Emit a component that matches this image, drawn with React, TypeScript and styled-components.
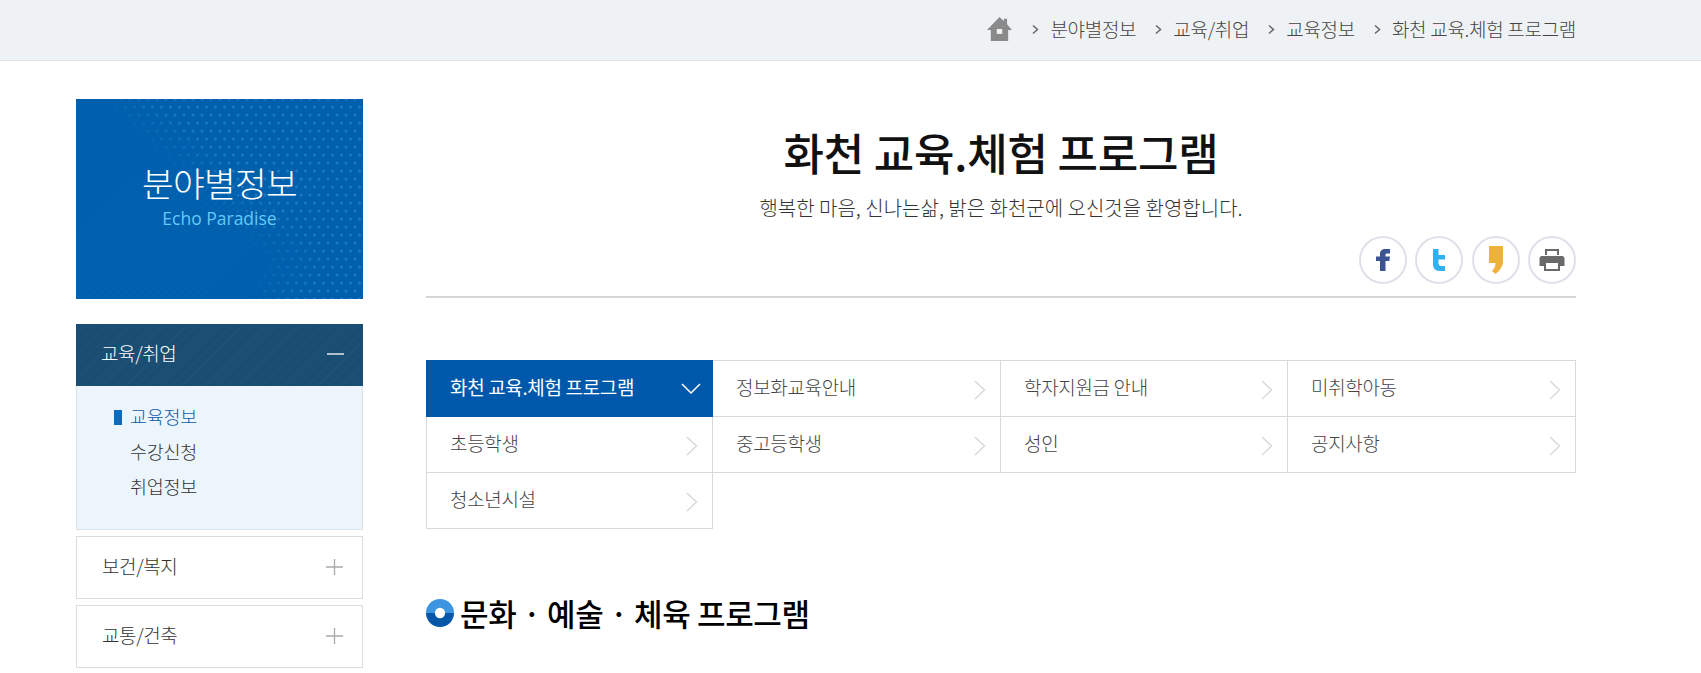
import React from "react";
import styled, { createGlobalStyle } from "styled-components";

const Global = createGlobalStyle`
  html, body { margin: 0; padding: 0; height: 673px; overflow: hidden; background: #fff; }
  body { font-family: "Noto Sans CJK KR", "Noto Sans", sans-serif; color: #333; }
  * { box-sizing: border-box; }
`;
const TopBar = styled.div`
  height: 61px; background: #eff2f5; border-bottom: 1px solid #dfe3e6;
  display: flex; justify-content: flex-end; align-items: center; padding: 0 125px 2px 0;
`;
const Crumb = styled.span`
  font-size: 19px; font-weight: 300; color: #444; letter-spacing: -0.3px; display: flex; align-items: center; margin-left: 18px; line-height: 24px;
`;
const Body = styled.div`
  display: flex; gap: 63px; padding: 38px 125px 0 76px;
`;
const Side = styled.aside`
  width: 287px; flex: none;
`;
const Banner = styled.div`
  height: 200px; position: relative; overflow: hidden; background: #0060ad; color: #fff;
  display: flex; flex-direction: column; align-items: center; padding-top: 62px;
`;
const BannerArt = styled.svg`
  position: absolute; inset: 0; width: 100%; height: 100%;
`;
const BannerTitle = styled.div`
  position: relative; font-size: 34.5px; line-height: 42px; font-weight: 300; letter-spacing: -0.7px;
`;
const BannerSub = styled.div`
  position: relative; font-family: "Open Sans", sans-serif; font-size: 17.5px; line-height: 24px; color: #66c8fb; margin-top: 3px;
`;
const MenuHead = styled.div<{ $active?: boolean }>`
  height: ${p => (p.$active ? 62 : 63)}px; margin-top: ${p => (p.$active ? 25 : 6)}px; padding: 0 18px 0 25px;
  display: flex; align-items: center; justify-content: space-between;
  font-size: 19px; font-weight: 300; letter-spacing: -0.4px;
  color: ${p => (p.$active ? "#fff" : "#333")};
  border: ${p => (p.$active ? "none" : "1px solid #dcdcdc")};
  background: ${p => (p.$active ? "repeating-linear-gradient(135deg,#1a4d72 0 6px,#1d5077 6px 8px)" : "#fff")};
  & > span { margin-top: -5px; }
`;
const SubPanel = styled.div`
  height: 144px; background: #edf5fc; border: 1px solid #dce3e8; border-top: none; padding: 13px 0 0 53px;
`;
const SubItem = styled.div<{ $active?: boolean }>`
  font-size: 18.5px; font-weight: 300; line-height: 35px; position: relative; letter-spacing: -0.3px;
  color: ${p => (p.$active ? "#0f5ca6" : "#333")};
  ${p => p.$active && `&::before{content:"";position:absolute;left:-16px;top:11px;width:8px;height:15px;background:#0a6cc0;}`}
`;
const Main = styled.main`
  flex: 1; min-width: 0;
`;
const Head = styled.div`
  border-bottom: 2px solid #d6d6d6; height: 199px; display: flex; flex-direction: column; align-items: center;
`;
const Title = styled.h1`
  margin: 22px 0 0; font-size: 44px; line-height: 62px; font-weight: 500; color: #111; letter-spacing: -0.2px;
`;
const Subtitle = styled.p`
  margin: 11px 0 0; font-size: 20px; font-weight: 300; line-height: 28px; color: #333; letter-spacing: 0;
`;
const Shares = styled.div`
  align-self: flex-end; display: flex; gap: 8.300px; margin-top: 14px;
`;
const Share = styled.div`
  width: 48px; height: 48px; border: 2px solid #dfe1ea; border-radius: 50%; display: flex; align-items: center; justify-content: center; background: #fff;
`;
const Grid = styled.div`
  margin-top: 62px; display: grid; grid-template-columns: 287px 288px 287px 288px; border-top: 1px solid #d9d9d9;
`;
const Cell = styled.div<{ $on?: boolean; $first?: boolean }>`
  padding: 0 14px 0 23px; display: flex; align-items: center; justify-content: space-between;
  font-size: 19px; font-weight: ${p => (p.$on ? 400 : 300)}; letter-spacing: -0.35px;
  color: ${p => (p.$on ? "#fff" : "#444")};
  background: ${p => (p.$on ? "#0058aa" : "#fff")};
  margin-top: ${p => (p.$on ? "-1px" : "0")};
  height: ${p => (p.$on ? "57px" : "56px")};
  border-right: 1px solid #d9d9d9;
  border-bottom: 1px solid #d9d9d9;
  border-left: ${p => (p.$first ? "1px solid #d9d9d9" : "none")};
  ${p => p.$on && "border: none; padding: 0 12px 0 24px;"}
  & > span { margin-top: -5px; }
`;
const Section = styled.h2`
  margin: 62px 0 0; display: flex; align-items: center; gap: 6px; font-size: 31px; line-height: 44px; font-weight: 500; color: #000; letter-spacing: -0.35px;
`;

const Home = () => (
  <svg width="27" height="26" viewBox="0 0 24 24">
    <path fill="#8a8a8a" d="M12 1 16 4.500V2.500h3v5l4.500 5.500H20v10H4V13H.5z" />
    <rect x="9.500" y="12" width="5" height="4.500" fill="#eff2f5" />
  </svg>
);
const Gt = () => (
  <svg width="9" height="11" viewBox="0 0 9 11" style={{ marginRight: 10 }}>
    <path d="M2 1.500 6.500 5.500 2 9.500" fill="none" stroke="#666" strokeWidth="1.500" />
  </svg>
);
const Plus = () => (
  <svg width="18" height="18" viewBox="0 0 18 18"><path d="M0 8h17M8.500 0v16" stroke="#aaa" strokeWidth="1.300" /></svg>
);
const Minus = () => (
  <svg width="18" height="18" viewBox="0 0 18 18"><path d="M0 8h17" stroke="#fff" strokeWidth="1.300" /></svg>
);
const Chev = () => (
  <svg width="12" height="20" viewBox="0 0 12 20" style={{ marginTop: 3 }}><path d="M1 1l9.500 9L1 19" fill="none" stroke="#d8d8d8" strokeWidth="1.400" /></svg>
);
const Down = () => (
  <svg width="20" height="12" viewBox="0 0 20 12"><path d="M1 1l9 9 9-9" fill="none" stroke="#fff" strokeWidth="1.500" /></svg>
);
const dots: React.ReactElement[] = [];
for (let r = 0; r < 26; r++) for (let c = 0; c < 34; c++) {
  const x = c * 9 + (r % 2 ? 4.500 : 0), y = r * 8;
  const upper = Math.max(0, Math.min(1, (x - y * 1.05 - 15) / 70));
  const lower = Math.max(0, Math.min(1, (x + y * 0.4 - 240) / 70)) * (y > 120 ? 1 : 0.8);
  const o = Math.max(upper, lower);
  if (o <= 0) continue;
  dots.push(<circle key={`${r}-${c}`} cx={x} cy={y} r="1.600" fill="#3f8fd0" opacity={o * 0.5} />);
}
const stripes: React.ReactElement[] = [];
for (let i = 0; i < 24; i++) stripes.push(<path key={i} d={`M${i * 8 - 60} 200 L${i * 8 + 60} 80`} stroke="#0a6ab5" strokeWidth="1.200" opacity={0.55} />);

const row1 = ["정보화교육안내", "학자지원금 안내", "미취학아동"];
const row2 = ["초등학생", "중고등학생", "성인", "공지사항"];

export default function App() {
  return (
    <>
      <Global />
      <TopBar>
        <Home />
        {["분야별정보", "교육/취업", "교육정보", "화천 교육.체험 프로그램"].map(t => (
          <Crumb key={t}><Gt />{t}</Crumb>
        ))}
      </TopBar>
      <Body>
        <Side>
          <Banner>
            <BannerArt viewBox="0 0 287 200">
              <g>{stripes}</g>
              <g>{dots}</g>
            </BannerArt>
            <BannerTitle>분야별정보</BannerTitle>
            <BannerSub>Echo Paradise</BannerSub>
          </Banner>
          <MenuHead $active><span>교육/취업</span><Minus /></MenuHead>
          <SubPanel>
            <SubItem $active>교육정보</SubItem>
            <SubItem>수강신청</SubItem>
            <SubItem>취업정보</SubItem>
          </SubPanel>
          <MenuHead><span>보건/복지</span><Plus /></MenuHead>
          <MenuHead><span>교통/건축</span><Plus /></MenuHead>
        </Side>
        <Main>
          <Head>
            <Title>화천 교육.체험 프로그램</Title>
            <Subtitle>행복한 마음, 신나는삶, 밝은 화천군에 오신것을 환영합니다.</Subtitle>
            <Shares>
              <Share>
                <svg width="20" height="26" viewBox="0 0 20 24"><path fill="#3b5591" d="M7 23V13H3V8.500h4V6C7 2.800 9 1 12.500 1H17v4.500h-3C12.800 5.500 12.500 6 12.500 7v1.500H17l-.7 4.500h-3.800v10z" /></svg>
              </Share>
              <Share>
                <svg width="20" height="26" viewBox="0 0 20 24"><path fill="#2fb0f2" d="M4 1h5.500v6H16v4.500H9.500V15c0 2 1 3 3 3H16v5h-5C6.500 23 4 20.500 4 16z" /></svg>
              </Share>
              <Share>
                <svg width="20" height="30" viewBox="0 0 20 30"><path fill="#eeb23c" d="M3 1h14v16c0 4-3.500 9-7.500 12L6 26c2-2 3.500-5 3.500-8H3z" /></svg>
              </Share>
              <Share>
                <svg width="26" height="24" viewBox="0 0 26 24">
                  <path fill="#6a6a6a" d="M6 1h14v6h-2V3H8v4H6zM3 8h20c1.500 0 2.500 1 2.500 2.500V18H21v5H5v-5H.5v-7.500C.5 9 1.500 8 3 8z" />
                  <rect x="7" y="15" width="12" height="6" fill="#fff" />
                </svg>
              </Share>
            </Shares>
          </Head>
          <Grid>
            <Cell $on $first><span>화천 교육.체험 프로그램</span><Down /></Cell>
            {row1.map(t => <Cell key={t}><span>{t}</span><Chev /></Cell>)}
            {row2.map((t, i) => <Cell key={t} $first={i === 0}><span>{t}</span><Chev /></Cell>)}
            <Cell $first><span>청소년시설</span><Chev /></Cell>
          </Grid>
          <Section>
            <svg width="28" height="30" viewBox="0 0 30 30">
              <path d="M0 15a15 15 0 0 1 30 0z" fill="#3d94e0" />
              <path d="M0 15a15 15 0 0 0 30 0z" fill="#0657a8" />
              <circle cx="15" cy="15" r="5.500" fill="#fff" />
            </svg>
            문화 · 예술 · 체육 프로그램
          </Section>
        </Main>
      </Body>
    </>
  );
}
